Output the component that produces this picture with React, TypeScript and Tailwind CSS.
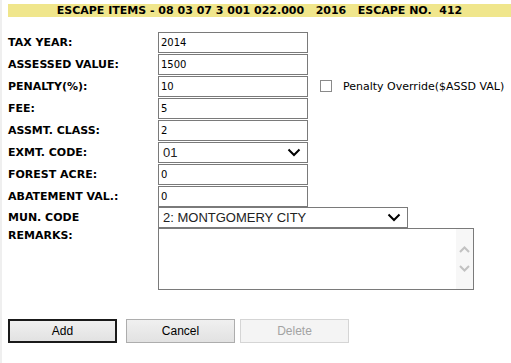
import React from "react";

const labelCls =
  "w-[150px] shrink-0 text-[11px] font-bold text-black leading-none";
const inputCls =
  "w-[150px] h-[21px] border border-[#7a7a7a] bg-white px-[2px] text-[10px] text-black outline-none";

function Chevron() {
  return (
    <svg width="14" height="9" viewBox="0 0 14 9" className="shrink-0">
      <path d="M1.5 1.5 L7 7 L12.5 1.5" fill="none" stroke="#000" strokeWidth="2" />
    </svg>
  );
}

function Select({ value, width }: { value: string; width: string }) {
  return (
    <div
      className={`${width} h-[21px] border border-[#7a7a7a] bg-white flex items-center justify-between pl-[4px] pr-[6px]`}
      style={{ fontFamily: '"Liberation Sans", Arial, sans-serif' }}
    >
      <span className="text-[13px] text-[#222] leading-none">{value}</span>
      <Chevron />
    </div>
  );
}

function Row({ label, children }: { label: string; children: React.ReactNode }) {
  return (
    <div className="flex items-center h-[22px]">
      <div className={labelCls}>{label}</div>
      {children}
    </div>
  );
}

function TextInput({ value }: { value: string }) {
  return <input className={inputCls} defaultValue={value} readOnly />;
}

export default function App() {
  return (
    <div
      className="w-[511px] h-[363px] bg-white border-l-2 border-[#efefef] overflow-hidden"
      style={{ fontFamily: '"DejaVu Sans", Verdana, sans-serif' }}
    >
      <div className="pt-[4px] pl-[6px]">
        <div className="h-[13px] bg-[#f0e68c] flex items-center justify-center text-[11px] font-bold text-black leading-none whitespace-pre">
          {"ESCAPE ITEMS - 08 03 07 3 001 022.000   2016   ESCAPE NO.  412"}
        </div>
      </div>
      <div className="pl-[6px] pt-[14px] flex flex-col">
        <Row label="TAX YEAR:">
          <TextInput value="2014" />
        </Row>
        <Row label="ASSESSED VALUE:">
          <TextInput value="1500" />
        </Row>
        <Row label="PENALTY(%):">
          <TextInput value="10" />
          <div className="ml-[12px] w-[12px] h-[12px] border border-[#8a8a8a] bg-white" />
          <span className="ml-[11px] text-[11px] text-black leading-none">
            Penalty Override($ASSD VAL)
          </span>
        </Row>
        <Row label="FEE:">
          <TextInput value="5" />
        </Row>
        <Row label="ASSMT. CLASS:">
          <TextInput value="2" />
        </Row>
        <Row label="EXMT. CODE:">
          <Select value="01" width="w-[150px]" />
        </Row>
        <Row label="FOREST ACRE:">
          <TextInput value="0" />
        </Row>
        <Row label="ABATEMENT VAL.:">
          <TextInput value="0" />
        </Row>
        <div className="flex items-center h-[21px]">
          <div className={labelCls}>MUN. CODE</div>
          <Select value="2: MONTGOMERY CITY" width="w-[250px]" />
        </div>
        <div className="flex items-start">
          <div className={`${labelCls} pt-[2px]`}>REMARKS:</div>
          <div className="w-[316px] h-[62px] border border-[#7a7a7a] bg-white flex">
            <div className="flex-1" />
            <div className="w-[17px] bg-[#f7f7f7] flex flex-col items-center justify-center gap-[12px]">
              <svg width="11" height="7" viewBox="0 0 11 7">
                <path d="M1 6 L5.5 1.5 L10 6" fill="none" stroke="#c2c2c2" strokeWidth="2" />
              </svg>
              <svg width="11" height="7" viewBox="0 0 11 7">
                <path d="M1 1 L5.5 5.5 L10 1" fill="none" stroke="#c2c2c2" strokeWidth="2" />
              </svg>
            </div>
          </div>
        </div>
        <div
          className="flex items-center mt-[29px] h-[24px] text-[12px]"
          style={{ fontFamily: '"Liberation Sans", Arial, sans-serif' }}
        >
          <button className="w-[109px] h-[24px] border-2 border-[#1a1a1a] bg-gradient-to-b from-[#f0f0f0] to-[#e2e2e2] text-black">
            Add
          </button>
          <button className="ml-[9px] w-[109px] h-[24px] border border-[#adadad] bg-gradient-to-b from-[#f0f0f0] to-[#e2e2e2] text-black">
            Cancel
          </button>
          <button className="ml-[5px] w-[109px] h-[24px] border border-[#d5d5d5] bg-[#f4f4f4] text-[#a3a3a3]">
            Delete
          </button>
        </div>
      </div>
    </div>
  );
}
